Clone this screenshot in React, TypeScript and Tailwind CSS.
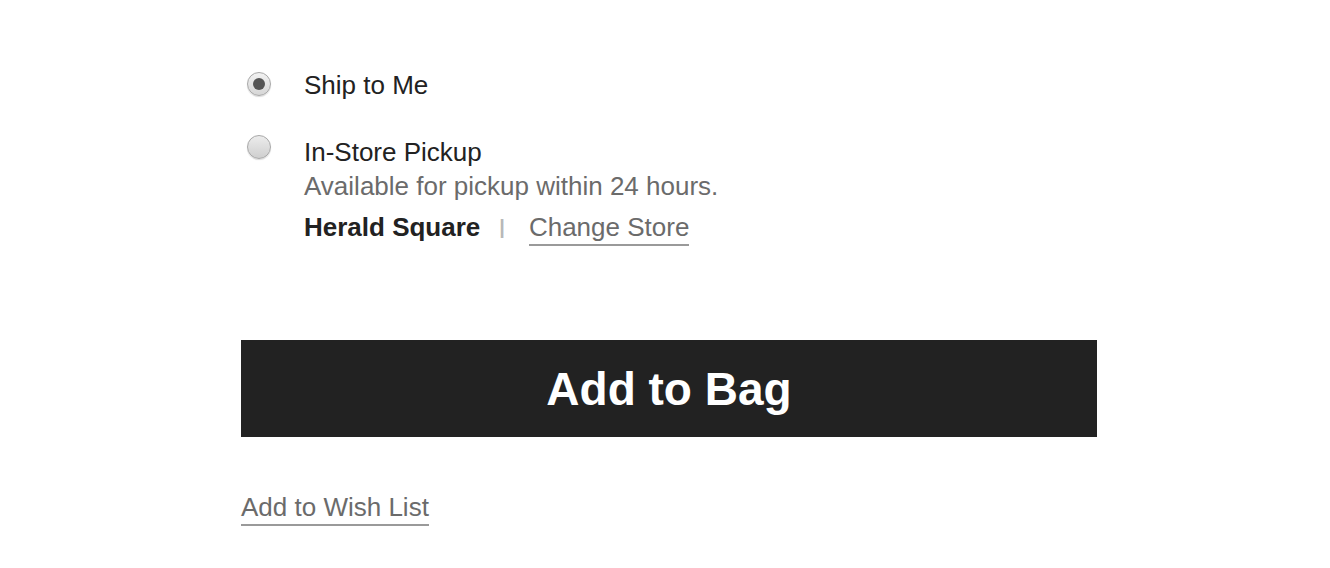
import { useState } from "react";

type Option = "ship" | "pickup";

function Radio({ checked }: { checked: boolean }) {
  return (
    <span
      className={`flex h-[24px] w-[24px] shrink-0 items-center justify-center rounded-full border border-[#a8a8a8] shadow-[0_1px_1px_rgba(0,0,0,0.15)] ${
        checked
          ? "bg-[linear-gradient(#f2f2f2,#d6d6d6)]"
          : "bg-[linear-gradient(#ececec,#cfcfcf)]"
      }`}
    >
      {checked && <span className="h-[12px] w-[12px] rounded-full bg-[#555]" />}
    </span>
  );
}

export default function App() {
  const [option, setOption] = useState<Option>("ship");

  return (
    <div className="min-h-[568px] bg-white pl-[241px] pt-[68px] font-['Liberation_Sans',Arial,sans-serif] text-[26px] leading-[34px] text-[#222]">
      <div className="flex flex-col">
        <label
          className="flex cursor-pointer items-start"
          onClick={() => setOption("ship")}
        >
          <span className="ml-[6px] mt-[4px]">
            <Radio checked={option === "ship"} />
          </span>
          <span className="ml-[33px]">Ship to Me</span>
        </label>

        <label
          className="mt-[33px] flex cursor-pointer items-start"
          onClick={() => setOption("pickup")}
        >
          <span className="ml-[6px] mt-[0px]">
            <Radio checked={option === "pickup"} />
          </span>
          <div className="ml-[33px] flex flex-col">
            <span>In-Store Pickup</span>
            <span className="text-[#6b6b6b]">
              Available for pickup within 24 hours.
            </span>
            <div className="mt-[7px] flex items-start">
              <span className="font-bold">Herald Square</span>
              <span className="ml-[19px] text-[20px] font-bold text-[#b8b8b8]">|</span>
              <a
                href="#"
                className="ml-[24px] border-b-2 border-[#9a9a9a] text-[#6b6b6b]"
              >
                Change Store
              </a>
            </div>
          </div>
        </label>
      </div>

      <button className="mt-[94px] flex h-[97px] w-[856px] items-center justify-center bg-[#222] text-[46px] font-bold text-white">
        Add to Bag
      </button>

      <div className="mt-[53px]">
        <a
          href="#"
          className="inline-block border-b-2 border-[#9a9a9a] text-[#6b6b6b]"
        >
          Add to Wish List
        </a>
      </div>
    </div>
  );
}
